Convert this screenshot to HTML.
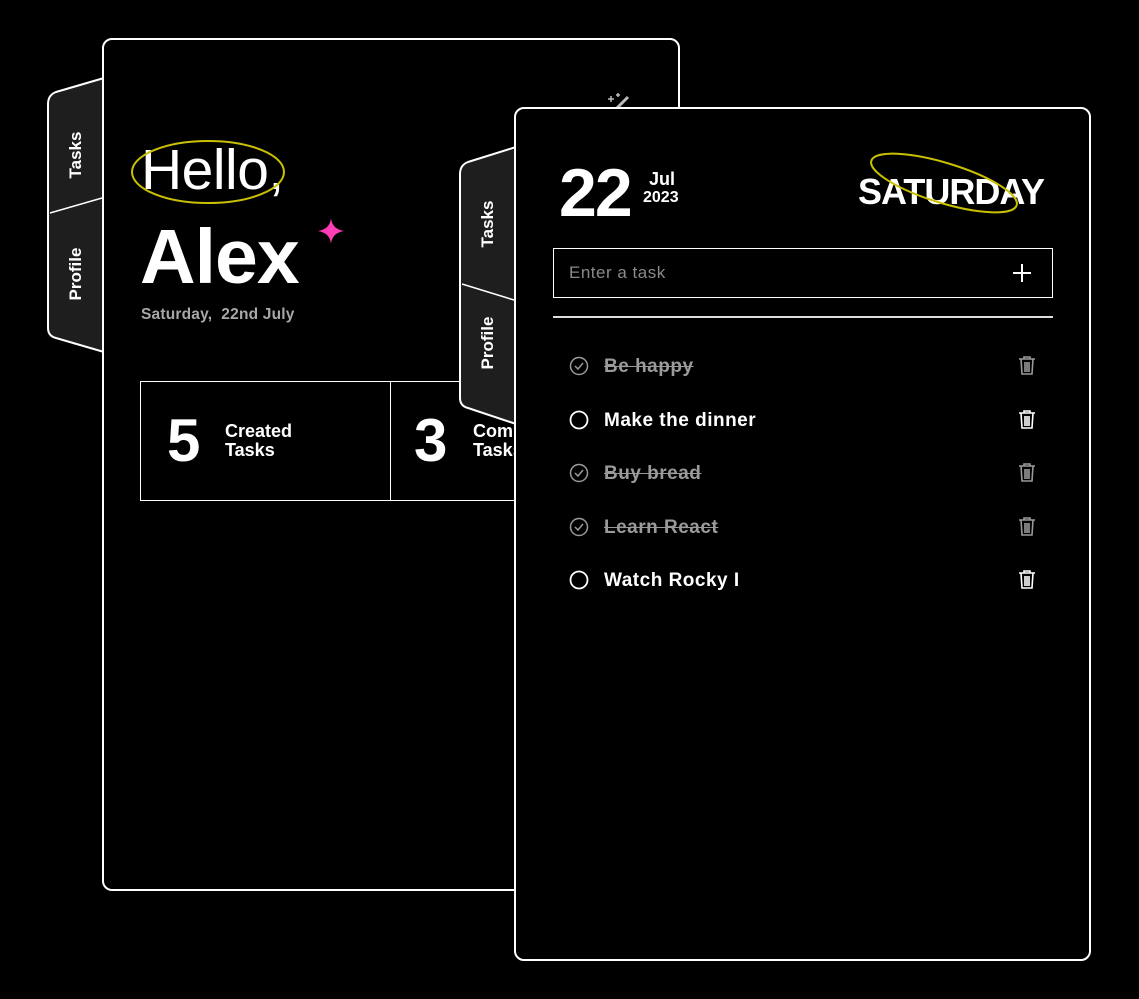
<!DOCTYPE html>
<html><head><meta charset="utf-8"><style>
*{margin:0;padding:0;box-sizing:border-box}
body{width:1139px;height:999px;background:#000;position:relative;overflow:hidden;font-family:"Liberation Sans",sans-serif;color:#fff}
.abs{position:absolute}
.card{position:absolute;background:#000;border:2px solid #fff;border-radius:10px}
.vt{position:absolute;transform:rotate(-90deg);transform-origin:center;font-size:17px;font-weight:bold;white-space:nowrap;text-align:center;width:100px;height:20px;line-height:20px}
.row{position:absolute;left:567px;height:24px;width:480px}
.row .t{position:absolute;left:37px;top:2px;font-size:19px;font-weight:bold;line-height:24px;letter-spacing:.5px}
.done .t{color:#9a9a9a;text-decoration:line-through}
</style></head><body>

<svg class="abs" style="left:0;top:0" width="1139" height="999">
<path d="M104 78 L56 92 Q48 95 48 104 L48 328 Q48 336 56 338 L104 352 Z" fill="#1e1e1e" stroke="#fff" stroke-width="2"/>
<path d="M50 213 L102 198" stroke="#fff" stroke-width="1.5"/>
</svg>
<div class="card" style="left:102px;top:38px;width:578px;height:853px"></div>
<div class="vt" style="left:26px;top:145px">Tasks</div>
<div class="vt" style="left:26px;top:264px">Profile</div>

<div class="abs" style="left:141px;top:136px;font-size:57px;line-height:68px;font-weight:300;letter-spacing:-0.5px">Hello,</div>
<svg class="abs" style="left:130px;top:136px" width="160" height="72"><ellipse cx="78" cy="36" rx="76" ry="31" fill="none" stroke="#c8c000" stroke-width="2"/></svg>
<div class="abs" style="left:140px;top:212px;font-size:77px;line-height:90px;font-weight:bold;letter-spacing:-1px">Alex</div>
<svg class="abs" style="left:318px;top:218px" width="26" height="26"><path d="M13 0 Q14 11 26 13 Q14 15 13 26 Q12 15 0 13 Q12 11 13 0Z" fill="#ff3db4"/></svg>
<div class="abs" style="left:141px;top:306px;font-size:15.5px;color:#a8a8a8;font-weight:bold;letter-spacing:.2px">Saturday,&nbsp; 22nd July</div>
<svg class="abs" style="left:604px;top:93px" width="28" height="20"><path d="M10 18 L24 4" stroke="#bbb" stroke-width="3"/><path d="M4 6h6M7 3v6M12 2h4M14 0v4" stroke="#bbb" stroke-width="1.5"/></svg>

<div class="abs" style="left:140px;top:381px;width:251px;height:120px;border:1.5px solid #fff"></div>
<div class="abs" style="left:390px;top:381px;width:140px;height:120px;border:1.5px solid #fff"></div>
<div class="abs" style="left:167px;top:405px;font-size:60px;font-weight:bold;line-height:72px">5</div>
<div class="abs" style="left:225px;top:422px;font-size:18px;font-weight:bold;line-height:19px">Created<br>Tasks</div>
<div class="abs" style="left:414px;top:405px;font-size:60px;font-weight:bold;line-height:72px">3</div>
<div class="abs" style="left:473px;top:422px;font-size:18px;font-weight:bold;line-height:19px">Completed<br>Tasks</div>

<svg class="abs" style="left:0;top:0" width="1139" height="999">
<path d="M516 147 L468 162 Q460 165 460 174 L460 398 Q460 406 468 408 L516 424 Z" fill="#1e1e1e" stroke="#fff" stroke-width="2"/>
<path d="M462 284 L514 300" stroke="#fff" stroke-width="1.5"/>
</svg>
<div class="card" style="left:514px;top:107px;width:577px;height:854px"></div>
<div class="vt" style="left:438px;top:214px">Tasks</div>
<div class="vt" style="left:438px;top:333px">Profile</div>

<div class="abs" style="left:559px;top:155px;font-size:68px;font-weight:bold;line-height:76px;letter-spacing:-2px">22</div>
<div class="abs" style="left:649px;top:170px;font-size:18px;font-weight:bold;line-height:19px">Jul</div>
<div class="abs" style="left:643px;top:189px;font-size:16px;font-weight:bold;line-height:18px">2023</div>
<div class="abs" style="left:858px;top:171px;font-size:36px;font-weight:bold;line-height:42px;letter-spacing:-1px">SATURDAY</div>
<svg class="abs" style="left:860px;top:145px" width="170" height="80"><ellipse cx="84" cy="38" rx="76" ry="20" transform="rotate(17 84 38)" fill="none" stroke="#c8c000" stroke-width="2"/></svg>

<div class="abs" style="left:553px;top:248px;width:500px;height:50px;border:1.5px solid #fff"></div>
<div class="abs" style="left:569px;top:263px;font-size:17px;color:#8a8a8a;letter-spacing:.5px">Enter a task</div>
<svg class="abs" style="left:1012px;top:263px" width="20" height="20"><path d="M10 1v18M1 10h18" stroke="#fff" stroke-width="2"/></svg>
<div class="abs" style="left:553px;top:316px;width:500px;height:2px;background:#ddd"></div>

<svg width="0" height="0" style="position:absolute"><defs>
<g id="tr"><path d="M2 4h16M7 4V2h6v2M4 4l1 15h10l1-15M8 7v10M10 7v10M12 7v10" fill="none" stroke="currentColor" stroke-width="1.6"/></g>
</defs></svg>

<div class="row done" style="top:353px"><svg class="abs" style="left:2px;top:3px" width="20" height="20"><circle cx="10" cy="10" r="8.5" fill="none" stroke="#9a9a9a" stroke-width="1.5"/><path d="M6 10l3 3 5-6" fill="none" stroke="#9a9a9a" stroke-width="1.5"/></svg><span class="t">Be happy</span><svg class="abs" style="left:450px;top:2px;color:#9a9a9a" width="20" height="22"><use href="#tr"/></svg></div>
<div class="row" style="top:407px"><svg class="abs" style="left:2px;top:3px" width="20" height="20"><circle cx="10" cy="10" r="8.5" fill="none" stroke="#fff" stroke-width="1.8"/></svg><span class="t">Make the dinner</span><svg class="abs" style="left:450px;top:2px;color:#fff" width="20" height="22"><use href="#tr"/></svg></div>
<div class="row done" style="top:460px"><svg class="abs" style="left:2px;top:3px" width="20" height="20"><circle cx="10" cy="10" r="8.5" fill="none" stroke="#9a9a9a" stroke-width="1.5"/><path d="M6 10l3 3 5-6" fill="none" stroke="#9a9a9a" stroke-width="1.5"/></svg><span class="t">Buy bread</span><svg class="abs" style="left:450px;top:2px;color:#9a9a9a" width="20" height="22"><use href="#tr"/></svg></div>
<div class="row done" style="top:514px"><svg class="abs" style="left:2px;top:3px" width="20" height="20"><circle cx="10" cy="10" r="8.5" fill="none" stroke="#9a9a9a" stroke-width="1.5"/><path d="M6 10l3 3 5-6" fill="none" stroke="#9a9a9a" stroke-width="1.5"/></svg><span class="t">Learn React</span><svg class="abs" style="left:450px;top:2px;color:#9a9a9a" width="20" height="22"><use href="#tr"/></svg></div>
<div class="row" style="top:567px"><svg class="abs" style="left:2px;top:3px" width="20" height="20"><circle cx="10" cy="10" r="8.5" fill="none" stroke="#fff" stroke-width="1.8"/></svg><span class="t">Watch Rocky I</span><svg class="abs" style="left:450px;top:2px;color:#fff" width="20" height="22"><use href="#tr"/></svg></div>

</body></html>
